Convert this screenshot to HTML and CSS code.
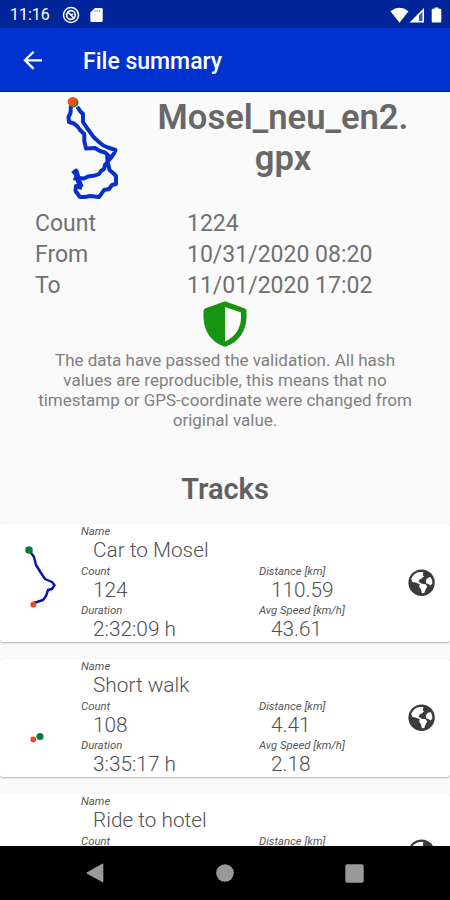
FILE: index.html
```
<!DOCTYPE html>
<html lang="en">
<head>
<meta charset="utf-8">
<title>File summary</title>
<link rel="stylesheet" href="styles.css">
</head>
<body>
<svg width="0" height="0" class="defs">
  <symbol id="globe" viewBox="0 0 28 28">
    <circle cx="13.600" cy="13.700" r="13.200" fill="#3b3b3b"/>
    <path fill="#fff" d="M3.200 9.800C4.600 6.200 7.600 3.500 11.500 2.900L15.300 3.100L14.800 6.200L16 7.600L13.800 9.300L11.600 10.600L10.500 12.700L13.600 14.600L17.600 15.300L19.300 17.500L17.500 20.400L16.300 24L13.900 24.300L13 20.400L11.100 17.500L11.800 15.200L7.500 13.400L4.300 13Z"/>
    <path fill="#fff" d="M19.500 8.900L22.400 8.100C23.900 10 24.600 12.500 24.200 15L22.300 16.400L20.300 15.100L18.100 14.200L17.800 11.600Z"/>
    <path fill="#3b3b3b" d="M12 12.600l3.800.5.800 1.700-3-.4z"/>
  </symbol>
</svg>
<div class="phone">
  <header class="status">
    <span class="clock">11:16</span>
    <svg class="ring" width="18" height="18" viewBox="0 0 18 18" fill="none" stroke="#fff">
      <circle cx="9" cy="9" r="7.500" stroke-width="1.500"/>
      <circle cx="9" cy="9" r="4.300" stroke-width="1.700"/>
      <path d="M5.500 5.800l6.900 6.700M8.300 8.600l2.800-.3" stroke-width="1.600"/>
    </svg>
    <svg class="sd" width="13" height="16" viewBox="0 0 13 16"><path fill="#fff" d="M5 1h6.500q1.200 0 1.200 1.200v11.600q0 1.200-1.200 1.200h-10Q.3 15 .3 13.800V5.500z"/><path d="M5 3v2M7.300 3v2M9.600 3v2" stroke="#7f91cd"/></svg>
    <span class="spacer"></span>
    <svg width="54" height="18" viewBox="0 0 54 18" fill="#fff"><path d="M.5 5.200Q9.500-1.500 18.500 5.200L9.500 16.700z"/><path fill-rule="evenodd" d="M34 2v14.500H19.500zM32.300 6L29 9.500v5.500h3.300z"/><path fill="#7485c7" d="M29 9.500L32.300 6v9H29z" opacity=".55"/><path d="M44.500 1.500h4v1.300h1.600q1.200 0 1.200 1.200v11.300q0 1.200-1.200 1.200h-7.200q-1.200 0-1.200-1.200V4q0-1.200 1.200-1.200h1.600z"/></svg>
  </header>
  <div class="appbar">
    <svg width="20" height="20" viewBox="0 0 20 20" fill="none" stroke="#fff" stroke-width="2.300"><path d="M19 10.300H2M10.600 1.700L2 10.300l8.600 8.600"/></svg>
    <h1>File summary</h1>
  </div>
  <main>
    <section class="file">
      <svg width="120" height="112" viewBox="40 92 120 112" fill="none" stroke="#0830c8" stroke-width="4" stroke-linejoin="round">
        <path d="M71 105L70.500 113L68.500 117L69 122L74 123.500L78 127L80 130L84.300 134L84.300 141L86 148.500L95 148L100 151L105 152.500L110 157M77.300 106.700L80 111L83 114L83 122L87 128L93.300 136.700L99 142L103.300 145.500L108 147.500L115.500 150L114 153.500L110.700 158L105 165L104 169L101 171L99 174L95 175.500L88 176.500L84 178.500L79 178M107 154L107.500 161L109.500 170L113 173L116 176L116 184L112 185L109 189L104 190L101 194.500L99 197L90 196L85 197L80 197L77 193L75.500 191L76 186L82 188"/>
        <path stroke-width="5.500" d="M73 174L76 171.500L78 179L74 177M77 177L81 187"/>
        <circle cx="73.500" cy="102.500" r="5" fill="#24833a" stroke="none"/>
        <circle cx="72.300" cy="101.800" r="4.600" fill="#f24e16" stroke="none"/>
      </svg>
      <h2>Mosel_neu_en2.<br>gpx</h2>
    </section>
    <dl class="facts">
      <dt>Count</dt><dd>1224</dd>
      <dt>From</dt><dd>10/31/2020 08:20</dd>
      <dt>To</dt><dd>11/01/2020 17:02</dd>
    </dl>
    <section class="valid">
      <svg width="44" height="46" viewBox="0 0 44 46"><path fill="#179310" d="M22 .3L42 7.600Q43.500 8.300 43.500 9.800V16C43.500 30.500 34.500 41.500 23.500 45.300Q22 46 20.500 45.300C9.500 41.500.5 30.500.5 16V9.800Q.5 8.300 2 7.600z"/><path fill="#fff" d="M22 6L38 11.500V16.500C38 27.500 31.500 36.500 22 40.500z"/></svg>
      <p>The data have passed the validation. All hash<br>values are reproducible, this means that no<br>timestamp or GPS-coordinate were changed from<br>original value.</p>
    </section>
    <h3>Tracks</h3>
    <div class="list">
      <article class="card">
        <svg class="trace" width="81" height="118" viewBox="0 524 81 118" fill="none"><path stroke="#0712b5" stroke-width="2.400" stroke-linejoin="round" d="M29 550L34 557L36 565L41 573L45 579L52 582L54.500 585L52 589L48 590L46 596L43 600L34 603"/><circle cx="29" cy="550" r="3.800" fill="#087b39"/><circle cx="33.300" cy="604.500" r="2.900" fill="#f4471c"/></svg>
        <dl>
          <div class="wide"><dt>Name</dt><dd>Car to Mosel</dd></div>
          <div><dt>Count</dt><dd>124</dd></div><div><dt>Distance [km]</dt><dd>110.59</dd></div>
          <div><dt>Duration</dt><dd>2:32:09 h</dd></div><div><dt>Avg Speed [km/h]</dt><dd>43.61</dd></div>
        </dl>
        <svg class="globe" width="28" height="28"><use href="#globe"/></svg>
      </article>
      <article class="card">
        <svg class="trace" width="81" height="118" viewBox="0 659 81 118"><circle cx="40" cy="736.500" r="3.600" fill="#087b39"/><circle cx="33.300" cy="739.500" r="2.900" fill="#f4471c"/></svg>
        <dl>
          <div class="wide"><dt>Name</dt><dd>Short walk</dd></div>
          <div><dt>Count</dt><dd>108</dd></div><div><dt>Distance [km]</dt><dd>4.41</dd></div>
          <div><dt>Duration</dt><dd>3:35:17 h</dd></div><div><dt>Avg Speed [km/h]</dt><dd>2.18</dd></div>
        </dl>
        <svg class="globe" width="28" height="28"><use href="#globe"/></svg>
      </article>
      <article class="card">
        <svg class="trace" width="81" height="118"></svg>
        <dl>
          <div class="wide"><dt>Name</dt><dd>Ride to hotel</dd></div>
          <div><dt>Count</dt></div><div><dt>Distance [km]</dt></div>
        </dl>
        <svg class="globe" width="28" height="28"><use href="#globe"/></svg>
      </article>
    </div>
  </main>
  <nav>
    <svg width="18" height="20" viewBox="0 0 18 20"><path fill="#999" d="M16.200.7Q17.300.3 17.300 1.500v17q0 1.200-1.100.6L1 10.700q-1-.7 0-1.400z"/></svg>
    <svg width="18" height="18" viewBox="0 0 18 18"><circle cx="9" cy="9" r="8.800" fill="#999"/></svg>
    <svg width="19" height="19" viewBox="0 0 19 19"><rect x=".3" y=".3" width="18.400" height="18.400" rx="1.800" fill="#999"/></svg>
  </nav>
</div>
</body>
</html>
```
FILE: styles.css
```
* { box-sizing: border-box; margin: 0; padding: 0; }
body { font-family: Roboto, "Liberation Sans", sans-serif; background: #fafafa; color: #707070; }
svg { display: block; flex: none; }
.defs { position: absolute; }
.phone { width: 450px; height: 900px; display: flex; flex-direction: column; overflow: hidden; }
.status { height: 28px; flex: none; background: #002598; display: flex; align-items: center; padding: 1px 6px 0 10px; color: #fff; }
.clock { font-size: 16px; line-height: 28px; width: 52px; white-space: nowrap; }
.sd { margin-left: 10px; }
.spacer { flex: 1; }
.appbar { height: 64px; flex: none; background: #0033cf; border-bottom: 1px solid #0a08b8; display: flex; align-items: center; padding: 4px 0 0 23px; color: #fff; }
.appbar svg { margin-top: -4px; }
.appbar h1 { font-size: 23px; font-weight: 500; line-height: 30px; margin-left: 40px; white-space: nowrap; }
main { flex: 1; min-height: 0; overflow: hidden; background: #fafafa; }
.file { display: flex; height: 116px; padding-left: 40px; }
.file h2 { width: 260px; margin: 5px 0 0 -7px; text-align: center; font-size: 34.6px; line-height: 41px; font-weight: 600; white-space: nowrap; color: #686868; }
.facts { display: grid; grid-template-columns: 152px 1fr; grid-auto-rows: 31px; padding-left: 35px; font-size: 23px; line-height: 31px; white-space: nowrap; }
.valid { display: flex; flex-direction: column; align-items: center; }
.valid p { text-align: center; font-size: 17px; line-height: 20px; margin-top: 3px; white-space: nowrap; color: #808080; }
h3 { text-align: center; font-size: 29px; font-weight: 600; line-height: 36px; margin-top: 41px; color: #606060; }
.list { display: flex; flex-direction: column; gap: 17px; margin-top: 17px; }
.card { height: 118px; background: #fff; border-radius: 3px; box-shadow: 0 1px 2px rgba(0,0,0,.3); display: flex; align-items: center; flex: none; }
.card dl { width: 327px; height: 118px; display: grid; grid-template-columns: 178px 149px; grid-template-rows: repeat(3, 39.5px); white-space: nowrap; }
.card .wide { grid-column: 1 / 3; }
.card dt { font-size: 11.3px; line-height: 16px; font-style: italic; color: #555; }
.card dd { font-size: 20.8px; line-height: 20px; padding-left: 12px; font-weight: 300; color: #505050; }
nav { height: 54px; flex: none; background: #000; display: flex; align-items: center; justify-content: space-between; padding: 0 86px; }
```
